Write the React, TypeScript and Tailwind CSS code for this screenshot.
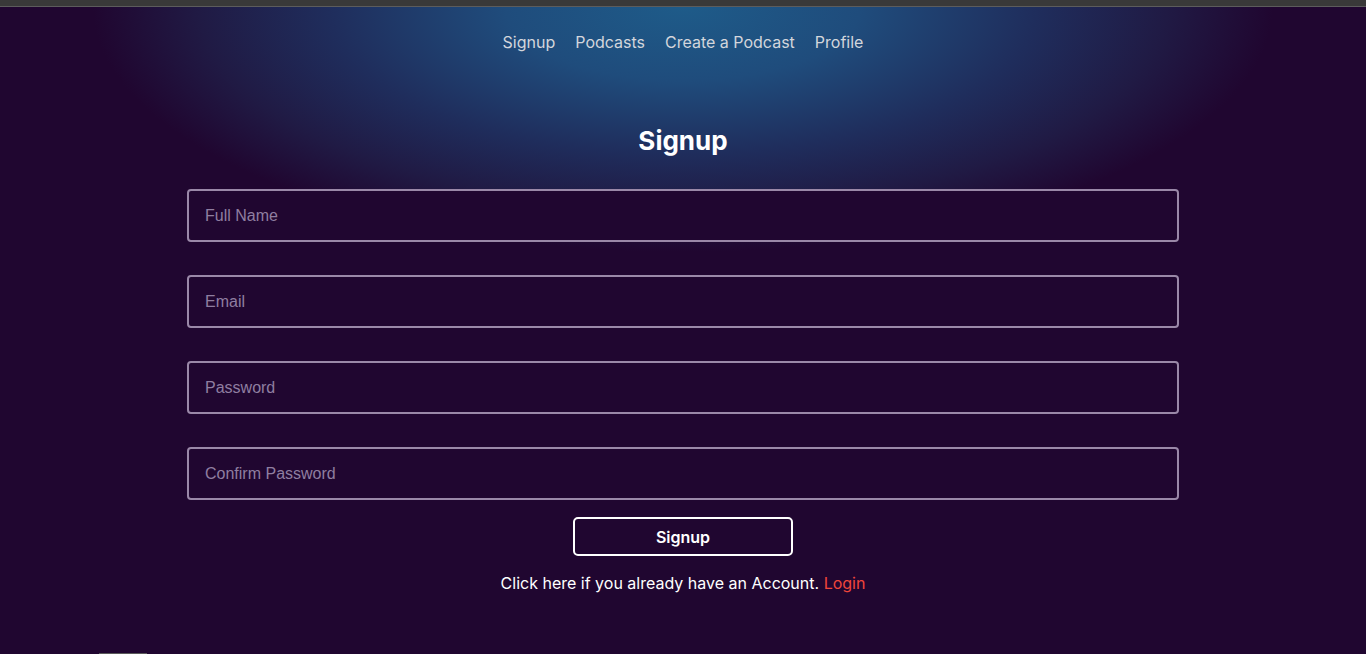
const fields = ['Full Name', 'Email', 'Password', 'Confirm Password'];

const navLinks = ['Signup', 'Podcasts', 'Create a Podcast', 'Profile'];

const App = () => {
	return (
		<div className="h-[654px] w-full overflow-hidden bg-[#200630] font-['Inter',sans-serif] flex flex-col">
			<div className="h-[7px] bg-[#393939] border-b border-[#5c5c5c] shrink-0" />
			<main className="relative flex-1 bg-[radial-gradient(ellipse_590px_245px_at_50%_0%,#1e5b89_0%,#1f4c7c_30%,#1f2d5c_60%,#201a44_82%,#200630_100%)]">
				<nav className="flex justify-center gap-5 pt-[23px] text-base text-[#d3d6dc]">
					{navLinks.map((link) => (
						<a key={link} href="#" className="leading-6">
							{link}
						</a>
					))}
				</nav>
				<section className="flex flex-col items-center">
					<h1 className="mt-[71px] text-[26px] font-bold text-white leading-8">Signup</h1>
					<form className="mt-[32px] flex flex-col items-center gap-[33px]">
						{fields.map((f) => (
							<input
								key={f}
								type={f.includes('Password') ? 'password' : 'text'}
								placeholder={f}
								className="w-[992px] h-[53px] rounded-[4px] border-2 border-[#9a88a8] bg-[#200630] px-4 text-base text-white font-['Liberation_Sans',sans-serif] placeholder:text-[#8f7ea0] outline-none"
							/>
						))}
					</form>
					<button className="mt-[17px] w-[220px] h-[39px] rounded-[5px] border-2 border-white text-white text-base font-semibold">
						Signup
					</button>
					<p className="mt-[15px] text-base text-white">
						Click here if you already have an Account.{' '}
						<a href="#" className="text-[#f0453a]">
							Login
						</a>
					</p>
				</section>
				<div className="absolute bottom-0 left-[99px] w-[48px] h-px bg-[#5a5a5a]" />
			</main>
		</div>
	);
};

export default App;
